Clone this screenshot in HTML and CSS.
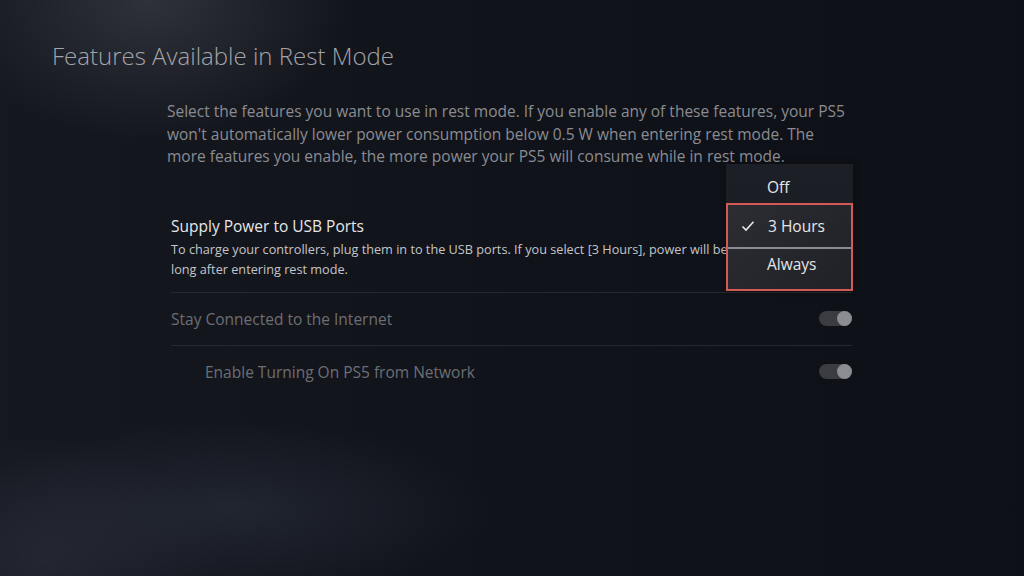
FILE: index.html
```html
<!DOCTYPE html>
<html lang="en">
<head>
<meta charset="utf-8">
<title>Features Available in Rest Mode</title>
<link rel="stylesheet" href="styles.css">
</head>
<body>
<div class="screen">
  <h1 class="title">Features Available in Rest Mode</h1>
  <div class="content">
    <p class="intro">Select the features you want to use in rest mode. If you enable any of these features, your PS5 won't automatically lower power consumption below 0.5 W when entering rest mode. The more features you enable, the more power your PS5 will consume while in rest mode.</p>
    <div class="list">
      <div class="row row-usb">
        <div class="row-title">Supply Power to USB Ports</div>
        <div class="row-desc">To charge your controllers, plug them in to the USB ports. If you select [3 Hours], power will be supplied for that long after entering rest mode.</div>
      </div>
      <div class="row row-toggle">
        <span class="row-label">Stay Connected to the Internet</span>
        <span class="toggle"><span class="knob"></span></span>
      </div>
      <div class="row row-toggle row-sub">
        <span class="row-label">Enable Turning On PS5 from Network</span>
        <span class="toggle"><span class="knob"></span></span>
      </div>
    </div>
    <div class="menu">
      <div class="menu-item menu-off">Off</div>
      <div class="menu-focus">
        <div class="menu-item selected"><svg class="check" viewBox="0 0 14 12" width="14" height="12"><path d="M1.5 6.5 L5 10 L12.5 1.8" fill="none" stroke="#e8e8ea" stroke-width="1.6"/></svg>3 Hours</div>
        <div class="menu-sep"></div>
        <div class="menu-item menu-always">Always</div>
      </div>
    </div>
  </div>
</div>
</body>
</html>
```

FILE: styles.css
```css
html, body {
  margin: 0;
  padding: 0;
}
body {
  width: 1024px;
  height: 576px;
  overflow: hidden;
  font-family: "Open Sans", "Noto Sans", sans-serif;
  background-color: #10121a;
  background-image:
    radial-gradient(ellipse 200px 140px at 150px 0px, rgba(70,72,82,0.55), rgba(70,72,82,0) 100%),
    radial-gradient(ellipse 260px 90px at 230px 510px, rgba(48,56,70,0.45), rgba(48,56,70,0) 100%),
    radial-gradient(ellipse 180px 120px at 40px 560px, rgba(48,52,64,0.5), rgba(48,52,64,0) 100%),
    linear-gradient(90deg, #161820 0%, #11131a 50%, #0e1017 100%);
}
.screen {
  position: relative;
  width: 1024px;
  height: 576px;
}
.title {
  margin: 0;
  padding: 40px 0 0 52px;
  font-size: 24px;
  line-height: 32px;
  font-weight: 300;
  color: #a3a4a9;
}
.content {
  position: relative;
  margin: 28px 0 0 167px;
  width: 690px;
}
.intro {
  margin: 0;
  width: 682px;
  font-size: 15.5px;
  line-height: 22.5px;
  font-weight: 400;
  color: #8b8c92;
}
.list {
  margin: 42px 0 0 4px;
  width: 681px;
}
.row {
  border-bottom: 1px solid #262830;
}
.row-usb {
  padding: 4px 0 13px;
}
.row-title {
  font-size: 15.5px;
  line-height: 24px;
  color: #e6e6e8;
}
.row-desc {
  margin-top: 1px;
  font-size: 12.7px;
  line-height: 20px;
  color: #c4c5c9;
}
.row-toggle {
  display: flex;
  align-items: center;
  justify-content: space-between;
  height: 52px;
}
.row-sub {
  border-bottom: none;
  padding-left: 34px;
}
.row-label {
  font-size: 15.5px;
  color: #6c6e74;
}
.toggle {
  position: relative;
  width: 33px;
  height: 15px;
  border-radius: 8px;
  background: #3a3c42;
}
.knob {
  position: absolute;
  right: 0;
  top: 0;
  width: 15px;
  height: 15px;
  border-radius: 50%;
  background: #8c8d92;
}
.menu {
  position: absolute;
  left: 559px;
  top: 64px;
  width: 127px;
  background: linear-gradient(180deg, #1d1f26 0%, #1b1d24 100%);
  box-shadow: 0 0 6px rgba(0,0,0,0.3);
}
.menu-item {
  display: flex;
  align-items: center;
  height: 40px;
  padding-left: 41px;
  font-size: 15.5px;
  color: #e6e6e8;
  box-sizing: border-box;
}
.menu-off {
  height: 39px;
  padding-top: 7px;
}
.check {
  margin-right: 13px;
}
.menu-focus {
  border: 2px solid #d45a55;
  background: linear-gradient(135deg, #2c2d33 0%, #1f2127 100%);
}
.menu-focus .menu-item {
  padding-left: 39px;
}
.menu-focus .menu-item.selected {
  height: 42px;
  padding-left: 13px;
}
.menu-focus .menu-always {
  padding-bottom: 10px;
}
.menu-sep {
  height: 2px;
  background: #8a8b96;
}
```
